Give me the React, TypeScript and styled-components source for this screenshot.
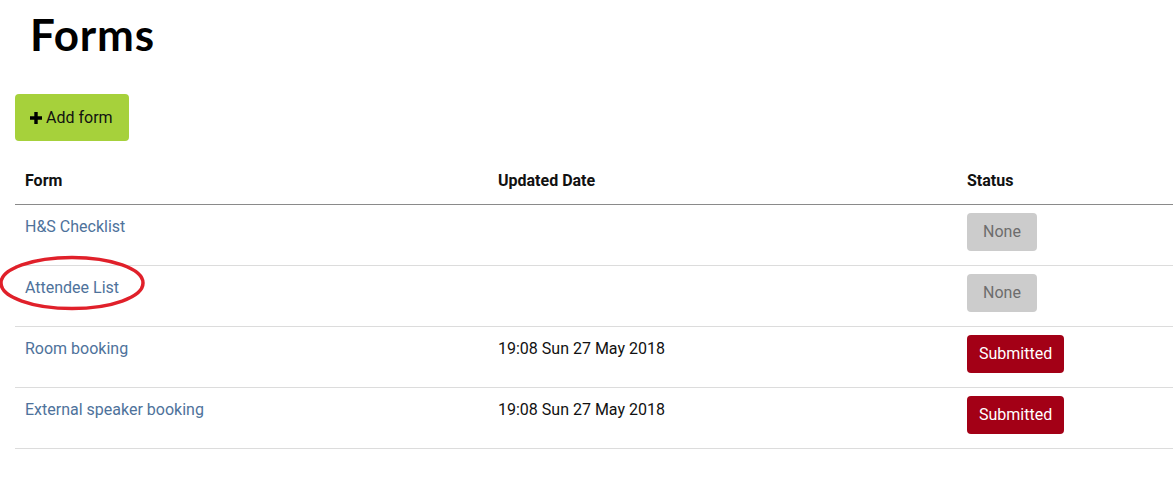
import React from "react";
import styled, { createGlobalStyle } from "styled-components";

const Global = createGlobalStyle`
  html, body { margin: 0; padding: 0; background: #fff; }
  body { font-family: Roboto, "Liberation Sans", sans-serif; color: #111; overflow: hidden; }
`;

const Page = styled.div`
  padding: 0 0 0 15px;
  width: 1158px;
`;

const Title = styled.h1`
  margin: 0;
  padding: 8px 0 0 15px;
  height: 94px;
  box-sizing: border-box;
  font-family: Lato, "Liberation Sans", sans-serif;
  font-weight: 700;
  font-size: 44px;
  line-height: 52px;
  color: #000;
  letter-spacing: 0.8px;
`;

const AddButton = styled.button`
  display: inline-flex;
  align-items: center;
  gap: 4px;
  height: 47px;
  padding: 0 16px 0 15px;
  border: none;
  border-radius: 4px;
  background: #a6d13b;
  color: #111;
  font-family: Roboto, "Liberation Sans", sans-serif;
  font-size: 16px;
`;

const Table = styled.table`
  margin-top: 15px;
  width: 100%;
  border-collapse: collapse;
  table-layout: fixed;
`;

const Th = styled.th<{ $w: number }>`
  width: ${(p) => p.$w}px;
  text-align: left;
  font-weight: 700;
  font-size: 16px;
  padding: 13px 10px 11px;
  line-height: 24px;
  border-bottom: 1px solid #8a8a8a;
`;

const Row = styled.tr`
  border-bottom: 1px solid #dcdcdc;
`;

const Td = styled.td`
  height: 61px;
  box-sizing: border-box;
  vertical-align: top;
  padding: 10px 10px 0;
  font-size: 16px;
  line-height: 24px;
`;

const StatusTd = styled(Td)`
  padding-top: 8px;
`;

const FormLink = styled.a`
  color: #4e729b;
  text-decoration: none;
  position: relative;
`;

const Badge = styled.span<{ $kind: "none" | "submitted" }>`
  display: inline-block;
  min-width: 70px;
  box-sizing: border-box;
  text-align: center;
  height: 38px;
  line-height: 38px;
  padding: 0 12px;
  border-radius: 4px;
  font-size: 16px;
  background: ${(p) => (p.$kind === "none" ? "#cccccc" : "#a30016")};
  color: ${(p) => (p.$kind === "none" ? "#6d6d6d" : "#fff")};
`;

const Circle = styled.svg`
  position: absolute;
  left: -26px;
  top: -24px;
  pointer-events: none;
`;

const Plus = () => (
  <svg width="12" height="12" viewBox="0 0 12 12">
    <path d="M4.3 0h3.4v4.3H12v3.4H7.7V12H4.3V7.7H0V4.3h4.3z" fill="#000" />
  </svg>
);

type RowData = { name: string; date: string; status: "none" | "submitted"; circled?: boolean };

const rows: RowData[] = [
  { name: "H&S Checklist", date: "", status: "none" },
  { name: "Attendee List", date: "", status: "none", circled: true },
  { name: "Room booking", date: "19:08 Sun 27 May 2018", status: "submitted" },
  { name: "External speaker booking", date: "19:08 Sun 27 May 2018", status: "submitted" },
];

export default function App() {
  return (
    <>
      <Global />
      <Page>
        <Title>Forms</Title>
        <AddButton>
          <Plus /> Add form
        </AddButton>
        <Table>
          <thead>
            <tr>
              <Th $w={453}>Form</Th>
              <Th $w={449}>Updated Date</Th>
              <Th $w={196}>Status</Th>
            </tr>
          </thead>
          <tbody>
            {rows.map((r) => (
              <Row key={r.name}>
                <Td>
                  <FormLink href="#">
                    {r.name}
                    {r.circled && (
                      <Circle width="150" height="60" viewBox="0 0 150 60">
                        <ellipse cx="73" cy="29" rx="71" ry="25.5" fill="none" stroke="#e0202a" strokeWidth="3.5" />
                      </Circle>
                    )}
                  </FormLink>
                </Td>
                <Td>{r.date}</Td>
                <StatusTd>
                  <Badge $kind={r.status}>{r.status === "none" ? "None" : "Submitted"}</Badge>
                </StatusTd>
              </Row>
            ))}
          </tbody>
        </Table>
      </Page>
    </>
  );
}
